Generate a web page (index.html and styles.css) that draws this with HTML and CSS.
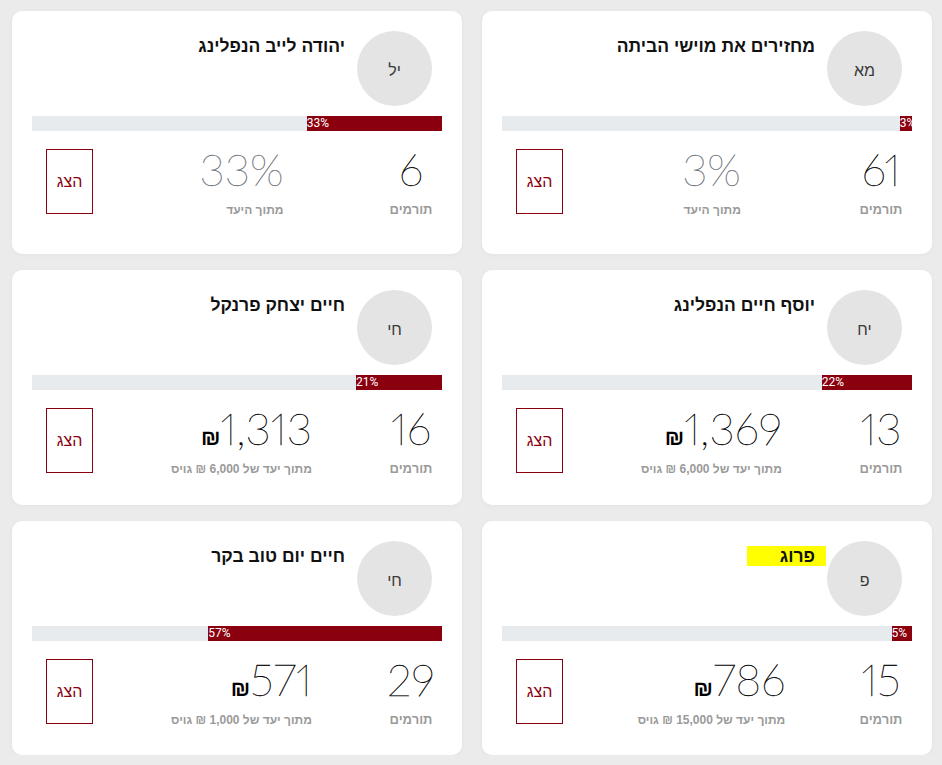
FILE: index.html
```html
<!DOCTYPE html>
<html lang="he" dir="rtl">
<head>
<meta charset="utf-8">
<title>קמפיינים</title>
<link rel="stylesheet" href="styles.css">
</head>
<body>
<div class="grid">

  <div class="card">
    <div class="head">
      <div class="avatar">מא</div>
      <h3 class="title">מחזירים את מוישי הביתה</h3>
    </div>
    <div class="progress"><div class="fill" style="width:3%">3%</div></div>
    <div class="stats">
      <div class="stat donors"><div class="num">61</div><div class="lbl">תורמים</div></div>
      <div class="stat raised"><div class="num pct">3%</div><div class="lbl sm">מתוך היעד</div></div>
      <button class="show">הצג</button>
    </div>
  </div>

  <div class="card">
    <div class="head">
      <div class="avatar">יל</div>
      <h3 class="title">יהודה לייב הנפלינג</h3>
    </div>
    <div class="progress"><div class="fill" style="width:33%">33%</div></div>
    <div class="stats">
      <div class="stat donors"><div class="num">6</div><div class="lbl">תורמים</div></div>
      <div class="stat raised"><div class="num pct">33%</div><div class="lbl sm">מתוך היעד</div></div>
      <button class="show">הצג</button>
    </div>
  </div>

  <div class="card">
    <div class="head">
      <div class="avatar">יח</div>
      <h3 class="title">יוסף חיים הנפלינג</h3>
    </div>
    <div class="progress"><div class="fill" style="width:22%">22%</div></div>
    <div class="stats">
      <div class="stat donors"><div class="num">13</div><div class="lbl">תורמים</div></div>
      <div class="stat raised"><div class="num amount"><span class="digits">1,369</span><span class="cur">₪</span></div><div class="lbl sm">מתוך יעד של 6,000 ₪ גויס</div></div>
      <button class="show">הצג</button>
    </div>
  </div>

  <div class="card">
    <div class="head">
      <div class="avatar">חי</div>
      <h3 class="title">חיים יצחק פרנקל</h3>
    </div>
    <div class="progress"><div class="fill" style="width:21%">21%</div></div>
    <div class="stats">
      <div class="stat donors"><div class="num">16</div><div class="lbl">תורמים</div></div>
      <div class="stat raised"><div class="num amount"><span class="digits">1,313</span><span class="cur">₪</span></div><div class="lbl sm">מתוך יעד של 6,000 ₪ גויס</div></div>
      <button class="show">הצג</button>
    </div>
  </div>

  <div class="card">
    <div class="head">
      <div class="avatar">פ</div>
      <h3 class="title"><span class="hl">פרוג</span></h3>
    </div>
    <div class="progress"><div class="fill" style="width:5%">5%</div></div>
    <div class="stats">
      <div class="stat donors"><div class="num">15</div><div class="lbl">תורמים</div></div>
      <div class="stat raised"><div class="num amount"><span class="digits">786</span><span class="cur">₪</span></div><div class="lbl sm">מתוך יעד של 15,000 ₪ גויס</div></div>
      <button class="show">הצג</button>
    </div>
  </div>

  <div class="card">
    <div class="head">
      <div class="avatar">חי</div>
      <h3 class="title">חיים יום טוב בקר</h3>
    </div>
    <div class="progress"><div class="fill" style="width:57%">57%</div></div>
    <div class="stats">
      <div class="stat donors"><div class="num">29</div><div class="lbl">תורמים</div></div>
      <div class="stat raised"><div class="num amount"><span class="digits">571</span><span class="cur">₪</span></div><div class="lbl sm">מתוך יעד של 1,000 ₪ גויס</div></div>
      <button class="show">הצג</button>
    </div>
  </div>

</div>
</body>
</html>
```

FILE: styles.css
```css
* { box-sizing: border-box; }

html { direction: rtl; }

body {
  margin: 0;
  background: #ebebeb;
  font-family: "Liberation Sans", Arial, "DejaVu Sans", sans-serif;
  color: #111;
}

.grid {
  display: grid;
  grid-template-columns: 1fr 1fr;
  grid-template-rows: 243px 235px 234px;
  column-gap: 20px;
  row-gap: 16px;
  padding: 11px 10px 0 12px;
}

.card {
  background: #fff;
  border-radius: 10px;
  padding: 20px;
  box-shadow: 0 1px 5px rgba(0, 0, 0, 0.04);
}

.head {
  display: flex;
  align-items: flex-start;
  gap: 12px;
  padding-right: 10px;
}

.avatar {
  flex: none;
  width: 75px;
  height: 75px;
  border-radius: 50%;
  background: #e4e4e4;
  display: flex;
  align-items: center;
  justify-content: center;
  font-size: 16px;
  color: #3a3a3a;
  padding-top: 4px;
}

.title {
  margin: 2px 0 0;
  font-size: 17.5px;
  font-weight: bold;
  line-height: 27px;
  color: #111;
}

.hl {
  background: #ffff00;
  padding: 0 11px 0 33px;
  margin-right: -11px;
}

.progress {
  margin-top: 10px;
  height: 15px;
  background: #e8ebee;
  display: flex;
  overflow: hidden;
}

.fill {
  height: 100%;
  background: #8b000f;
  color: #fff;
  font-family: Roboto, "Liberation Sans", sans-serif;
  font-size: 12px;
  line-height: 15px;
  direction: ltr;
  text-align: left;
  white-space: nowrap;
}

.stats {
  margin-top: 12px;
  display: flex;
  justify-content: space-between;
  align-items: center;
  padding: 0 10px 0 14px;
}

.stat {
  display: flex;
  flex-direction: column;
}

.donors {
  width: 42px;
  align-items: center;
}
.raised { align-items: flex-start; }

.num {
  font-family: Lato, "Liberation Sans", sans-serif;
  font-weight: 100;
  font-size: 44px;
  line-height: 53px;
  color: #000;
  font-variant-numeric: proportional-nums;
  -webkit-text-stroke: 0.35px currentColor;
  white-space: nowrap;
}

.pct { color: #6f747b; }

.amount {
  display: flex;
  align-items: baseline;
}

.cur {
  font-family: "Liberation Sans", "DejaVu Sans", sans-serif;
  font-weight: bold;
  font-size: 22px;
  line-height: 1;
  color: #000;
  margin-left: 1px;
  -webkit-text-stroke: 0;
}

.lbl {
  margin-top: 4px;
  font-size: 13px;
  font-weight: bold;
  line-height: 20px;
  color: #9a9a9a;
  white-space: nowrap;
}

.lbl.sm { font-size: 12px; }

.show {
  width: 47px;
  height: 65px;
  padding: 0;
  border: 1px solid #8b000f;
  background: transparent;
  color: #8b000f;
  font-family: "Liberation Sans", Arial, sans-serif;
  font-size: 16px;
}
```
